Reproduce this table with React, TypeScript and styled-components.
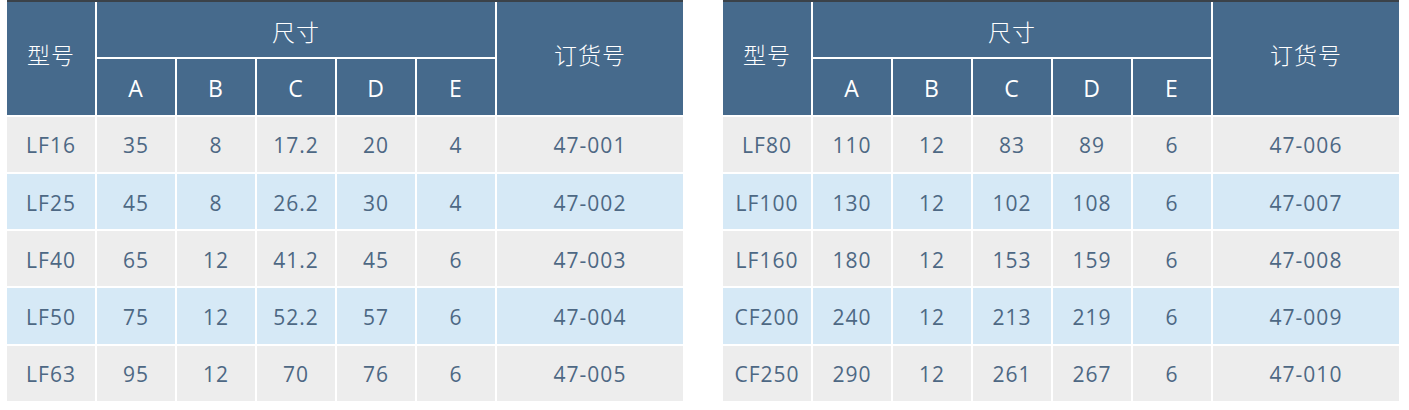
import React from "react";
import styled, { createGlobalStyle } from "styled-components";

const GlobalStyle = createGlobalStyle`
  html, body {
    margin: 0;
    padding: 0;
    background: #ffffff;
  }
  body {
    font-family: "Open Sans", "Noto Sans CJK SC", sans-serif;
  }
`;

const Page = styled.div`
  display: flex;
  gap: 40px;
  padding-left: 7px;
  width: 1409px;
  height: 410px;
  box-sizing: border-box;
  background: #ffffff;
`;

const Table = styled.div`
  display: grid;
  grid-template-columns: 88px repeat(5, 78px) 1fr;
  grid-auto-rows: 55.3px;
  gap: 2px;
  width: 676px;
  border-top: 2px solid #3b4249;
  background: #ffffff;
`;

const HeadCell = styled.div<{ $rows?: number; $cols?: number; $cjk?: boolean }>`
  grid-row: span ${(p) => p.$rows ?? 1};
  grid-column: span ${(p) => p.$cols ?? 1};
  background: #466a8c;
  color: #ffffff;
  display: flex;
  align-items: center;
  justify-content: center;
  font-family: ${(p) =>
    p.$cjk
      ? `"Noto Sans CJK SC", "Open Sans", sans-serif`
      : `"Open Sans", "Noto Sans CJK SC", sans-serif`};
  font-size: ${(p) => (p.$cjk ? "23px" : "23px")};
  font-weight: ${(p) => (p.$cjk ? 300 : 400)};
  letter-spacing: 1px;
  padding-top: ${(p) => (p.$rows === 2 ? "0" : p.$cjk ? "3px" : "2px")};
  padding-bottom: ${(p) => (p.$rows === 2 ? "8px" : "0")};
  box-sizing: border-box;
`;

const Cell = styled.div<{ $alt: boolean }>`
  background: ${(p) => (p.$alt ? "#d6e9f6" : "#ededed")};
  color: #4d6884;
  display: flex;
  align-items: center;
  justify-content: center;
  font-size: 21px;
  letter-spacing: 1px;
  padding-top: 2px;
  box-sizing: border-box;
`;

type Row = [string, string, string, string, string, string, string];

const left: Row[] = [
  ["LF16", "35", "8", "17.2", "20", "4", "47-001"],
  ["LF25", "45", "8", "26.2", "30", "4", "47-002"],
  ["LF40", "65", "12", "41.2", "45", "6", "47-003"],
  ["LF50", "75", "12", "52.2", "57", "6", "47-004"],
  ["LF63", "95", "12", "70", "76", "6", "47-005"],
];

const right: Row[] = [
  ["LF80", "110", "12", "83", "89", "6", "47-006"],
  ["LF100", "130", "12", "102", "108", "6", "47-007"],
  ["LF160", "180", "12", "153", "159", "6", "47-008"],
  ["CF200", "240", "12", "213", "219", "6", "47-009"],
  ["CF250", "290", "12", "261", "267", "6", "47-010"],
];

function SpecTable({ rows }: { rows: Row[] }) {
  return (
    <Table>
      <HeadCell $rows={2} $cjk>型号</HeadCell>
      <HeadCell $cols={5} $cjk>尺寸</HeadCell>
      <HeadCell $rows={2} $cjk>订货号</HeadCell>
      {["A", "B", "C", "D", "E"].map((l) => (
        <HeadCell key={l}>{l}</HeadCell>
      ))}
      {rows.map((r, i) =>
        r.map((v, j) => (
          <Cell key={`${i}-${j}`} $alt={i % 2 === 1}>
            {v}
          </Cell>
        ))
      )}
    </Table>
  );
}

export default function App() {
  return (
    <>
      <GlobalStyle />
      <Page>
        <SpecTable rows={left} />
        <SpecTable rows={right} />
      </Page>
    </>
  );
}
